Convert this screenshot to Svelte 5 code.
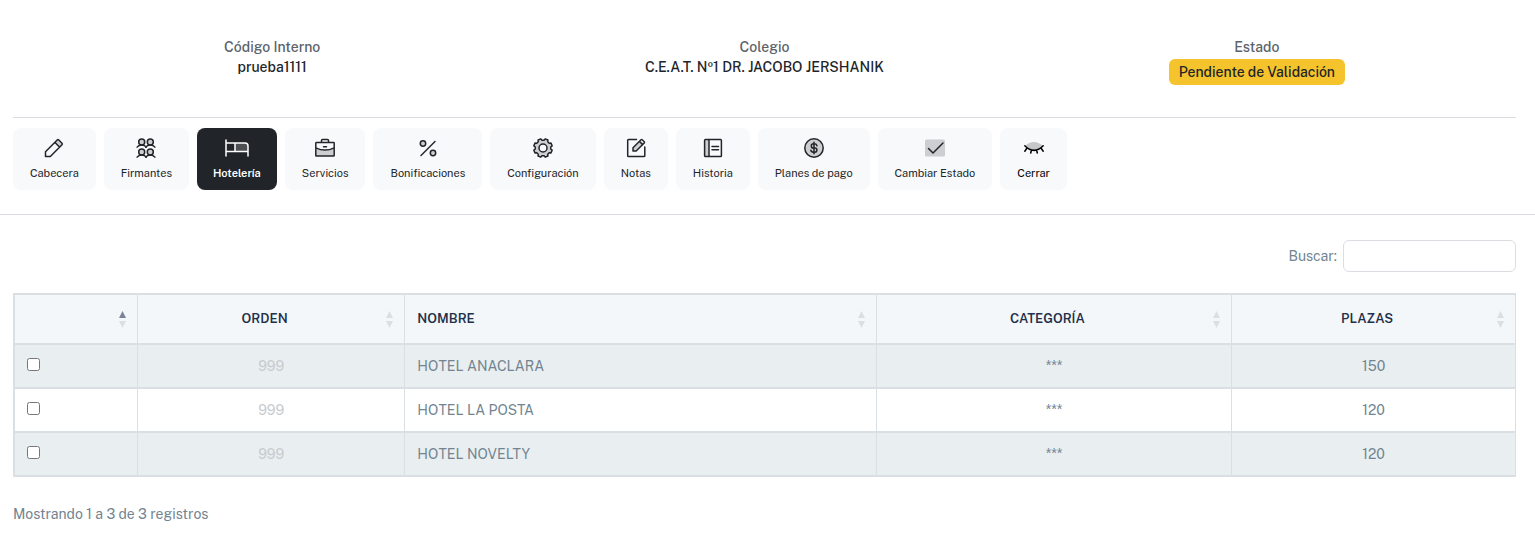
<!-- Hotel tab of an agreement: summary header, section tabs and the hotel grid. -->
<script lang="ts">
  type Hotel = { orden: number; nombre: string; categoria: string; plazas: number };

  const tabs = [
    { id: "cabecera", label: "Cabecera" },
    { id: "firmantes", label: "Firmantes" },
    { id: "hoteleria", label: "Hotelería" },
    { id: "servicios", label: "Servicios" },
    { id: "bonificaciones", label: "Bonificaciones" },
    { id: "configuracion", label: "Configuración" },
    { id: "notas", label: "Notas" },
    { id: "historia", label: "Historia" },
    { id: "pagos", label: "Planes de pago" },
    { id: "estado", label: "Cambiar Estado" },
    { id: "cerrar", label: "Cerrar" },
  ];

  const columns = [
    { key: "sel", label: "" },
    { key: "orden", label: "Orden" },
    { key: "nombre", label: "Nombre" },
    { key: "categoria", label: "Categoría" },
    { key: "plazas", label: "Plazas" },
  ];

  const hotels: Hotel[] = [
    { orden: 999, nombre: "HOTEL ANACLARA", categoria: "***", plazas: 150 },
    { orden: 999, nombre: "HOTEL LA POSTA", categoria: "***", plazas: 120 },
    { orden: 999, nombre: "HOTEL NOVELTY", categoria: "***", plazas: 120 },
  ];

  let active = $state("hoteleria");
  let sorted = $state("sel");
  let search = $state("");

  const rows = $derived(
    hotels.filter((h) => h.nombre.toLowerCase().includes(search.toLowerCase())),
  );

  // eight rounded teeth around the 20x20 icon box
  const gear = Array.from({ length: 8 }, (_, i) =>
    [[-15, 7.8], [-9, 9.4], [9, 9.4], [15, 7.8]]
      .map(([deg, r]) => {
        const a = ((i * 45 + 22.5 + deg) * Math.PI) / 180;
        return `${(10 + r * Math.cos(a)).toFixed(2)} ${(10 + r * Math.sin(a)).toFixed(2)}`;
      })
      .join("L"),
  ).join("L");
</script>

<header class="summary">
  <div class="item">
    <span class="caption">Código Interno</span>
    <strong>prueba1111</strong>
  </div>
  <div class="item">
    <span class="caption">Colegio</span>
    <strong>C.E.A.T. Nº1 DR. JACOBO JERSHANIK</strong>
  </div>
  <div class="item">
    <span class="caption">Estado</span>
    <span class="badge">Pendiente de Validación</span>
  </div>
</header>

<nav class="tabs">
  {#each tabs as tab (tab.id)}
    <button
      type="button"
      class="tab {tab.id}"
      class:active={active === tab.id}
      onclick={() => (active = tab.id)}
    >
      <svg viewBox="0 0 20 20" aria-hidden="true">
        {#if tab.id === "cabecera"}
          <path class="tone" d="M11 4.5 14 1.5 18.5 6 15.5 9z" />
          <path d="M1.5 18.5v-4.8L13.2 2q.8-.8 1.6 0l3.2 3.2q.8.8 0 1.6L6.3 18.5zM11 4.5 15.5 9" />
        {:else if tab.id === "firmantes"}
          {#each [[5.7, 4], [14.3, 4], [5.7, 14], [14.3, 14]] as [x, y]}
            <circle class="tone" cx={x} cy={y} r="3" />
            <circle cx={x} cy={y} r="3" />
            <path d="M{x - 4.6} {y + 5.2}q1.4-2.2 4.6-2.2t4.6 2.2" />
          {/each}
        {:else if tab.id === "hoteleria"}
          <path class="tone" d="M8 5h10q3 0 3 3v5.5H8z" />
          <path d="M-1 2v16M-1 5h19q3 0 3 3v10M-1 13.5h22M8 5v8.5" />
        {:else if tab.id === "servicios"}
          <path class="tone" d="M1 10q9 4.5 18 0v8H1z" />
          <path d="M1.5 4.5h17q.7 0 .7.7v12.2q0 .7-.7.7h-17q-.7 0-.7-.7V5.2q0-.7.7-.7zM6.5 4.5v-2q0-1 1-1h5q1 0 1 1v2M.8 9.8q9.2 4.5 18.4 0M8.5 8.8h3" />
        {:else if tab.id === "bonificaciones"}
          <circle class="tone" cx="5" cy="5.5" r="2.7" />
          <circle class="tone" cx="15" cy="15" r="2.7" />
          <circle cx="5" cy="5.5" r="2.7" />
          <circle cx="15" cy="15" r="2.7" />
          <path d="M3 17.5 17 3.5" />
        {:else if tab.id === "configuracion"}
          <path class="tone" fill-rule="evenodd" d="M{gear}zM14 10a4 4 0 1 0-8 0 4 4 0 0 0 8 0z" />
          <path d="M{gear}z" />
          <circle cx="10" cy="10" r="4" />
        {:else if tab.id === "notas"}
          <path class="tone" d="M7 13v-3l7.5-7.5 3 3L10 13z" />
          <path d="M10.5 1.5h-8q-.8 0-.8.8v15.5q0 .8.8.8H18q.8 0 .8-.8V9M7 13V9.8l8-8q.6-.6 1.2 0l2 2q.6.6 0 1.2l-8 8zM13.5 3.5l3.2 3.2" />
        {:else if tab.id === "historia"}
          <path class="tone" d="M2 2h4v16.5H2z" />
          <path d="M2.5 1.5h15q.9 0 .9.9v15.3q0 .9-.9.9h-15q-.9 0-.9-.9V2.4q0-.9.9-.9zM6 2v16.5M9 8.5h6.500M9 11.7h6.500" />
        {:else if tab.id === "pagos"}
          <circle class="tone" cx="10" cy="10" r="9.2" />
          <circle cx="10" cy="10" r="9.2" />
          <path d="M10 4.300v11.400M13 7.800q-.4-2-2.500-2H9.400a2 2 0 0 0 0 4.200h1.400a2.100 2.100 0 0 1 0 4.200H9.400q-2.200 0-2.500-2" />
        {:else if tab.id === "estado"}
          <rect class="tone" x="0" y="1.5" width="20" height="17" rx="1.5" />
          <path d="m3.500 10.500 4.500 4.500 10-10" />
        {:else}
          <path class="tone" d="M.8 8q9-8 18.400 0-9.200 9.500-18.400 0z" />
          <path d="M.8 7.800q9.200 9.200 18.400 0M3.200 9.800.8 13.200M7.500 12l-.8 3M12.500 12l.8 3M16.800 9.800l2.400 3.400" />
        {/if}
      </svg>
      {tab.label}
    </button>
  {/each}
</nav>

<main>
  <div class="search">
    <label for="buscar">Buscar:</label>
    <input id="buscar" type="search" bind:value={search} />
  </div>

  <table>
    <thead>
      <tr>
        {#each columns as col (col.key)}
          <th class={col.key} scope="col">
            <button
              type="button"
              class="sort"
              aria-label={col.label || "Selección"}
              onclick={() => (sorted = col.key)}
            >
              <span>{col.label}</span>
              <svg class:asc={sorted === col.key} viewBox="0 0 7 17" aria-hidden="true">
                <path class="up" d="M3.5 0 7 7H0z" />
                <path d="M3.5 17 0 10h7z" />
              </svg>
            </button>
          </th>
        {/each}
      </tr>
    </thead>
    <tbody>
      {#each rows as hotel (hotel.nombre)}
        <tr>
          <td class="sel"><input type="checkbox" aria-label={hotel.nombre} /></td>
          <td class="orden">{hotel.orden}</td>
          <td class="nombre">{hotel.nombre}</td>
          <td>{hotel.categoria}</td>
          <td>{hotel.plazas}</td>
        </tr>
      {/each}
    </tbody>
  </table>

  <p>Mostrando 1 a {rows.length} de {hotels.length} registros</p>
</main>

<style>
  :global(body) {
    margin: 0;
    background: #fff;
    color: #728490;
    font: 14px/20px "Public Sans", Inter, "Liberation Sans", sans-serif;
  }
  button,
  input {
    font: inherit;
  }
  .summary {
    display: grid;
    grid-template-columns: repeat(3, 1fr);
    margin: 0 19px 0 13px;
    padding: 37px 13px 32px;
    border-bottom: 1px solid #dadee2;
  }
  .item {
    display: flex;
    flex-direction: column;
    align-items: center;
  }
  .caption {
    color: #5c636a;
    font-weight: 500;
  }
  strong {
    color: #212529;
    font-weight: 500;
  }
  .badge {
    margin-top: 2px;
    padding: 3px 10px;
    border-radius: 6px;
    background: #f5c32c;
    color: #212529;
    font-weight: 500;
  }
  .tabs {
    display: flex;
    flex-wrap: wrap;
    gap: 8px;
    padding: 10px 13px 24px;
    border-bottom: 1px solid #dadee2;
  }
  .tab {
    display: flex;
    flex-direction: column;
    align-items: center;
    gap: 7px;
    padding: 10px 17px 9px;
    border: 0;
    border-radius: 8px;
    background: #f8f9fb;
    color: #212529;
    font-size: 11px;
    line-height: 16px;
    cursor: pointer;
  }
  .tab.cerrar {
    color: #000;
  }
  .tab.active {
    padding-inline: 16px;
    background: #212529;
    color: #fff;
    font-weight: 600;
  }
  .tab svg {
    width: 20px;
    height: 20px;
    overflow: visible;
    fill: none;
    stroke: currentColor;
    stroke-width: 1.5;
    stroke-linecap: round;
    stroke-linejoin: round;
  }
  .tab .tone {
    fill: currentColor;
    stroke: none;
    opacity: 0.2;
  }
  main {
    padding: 25px 19px 18px 13px;
  }
  .search {
    display: flex;
    justify-content: flex-end;
    align-items: center;
    gap: 6px;
  }
  .search input {
    box-sizing: border-box;
    width: 173px;
    height: 32px;
    padding: 4px 8px;
    border: 1px solid #dadee2;
    border-radius: 6px;
    background: #fff;
  }
  table {
    width: 100%;
    margin-top: 21px;
    border: solid #dadfe3;
    border-width: 2px 0 0 2px;
    border-spacing: 0;
    table-layout: fixed;
    text-align: center;
  }
  th,
  td {
    box-sizing: border-box;
    padding: 0;
    border: solid #dadfe3;
    border-width: 0 1px 2px 0;
  }
  th {
    height: 50px;
    background: #f3f7fa;
    color: #23304a;
    font-size: 13px;
    font-weight: 600;
    text-transform: uppercase;
  }
  td {
    height: 44px;
  }
  tbody tr:nth-child(odd) {
    background: #e9eef1;
  }
  th.sel {
    width: 8.2%;
  }
  th.orden {
    width: 17.8%;
  }
  th.nombre {
    width: 31.4%;
  }
  th.categoria {
    width: 23.7%;
  }
  .sort {
    display: flex;
    align-items: center;
    gap: 7px;
    width: 100%;
    padding: 0 11px 0 12px;
    border: 0;
    background: none;
    color: inherit;
    text-transform: inherit;
    cursor: pointer;
  }
  .sort span {
    flex: 1;
  }
  .sort svg {
    width: 7px;
    height: 17px;
    fill: #dadfe3;
  }
  .sort .asc .up {
    fill: #7b8494;
  }
  .nombre span,
  td.nombre,
  td.sel {
    text-align: left;
  }
  td.nombre,
  td.sel {
    padding-left: 12px;
  }
  td.sel input {
    display: block;
    width: 13px;
    height: 13px;
    margin: 0 0 4px;
  }
  td.orden {
    color: #c8cbce;
  }
  p {
    margin: 27px 0 0;
  }
</style>
